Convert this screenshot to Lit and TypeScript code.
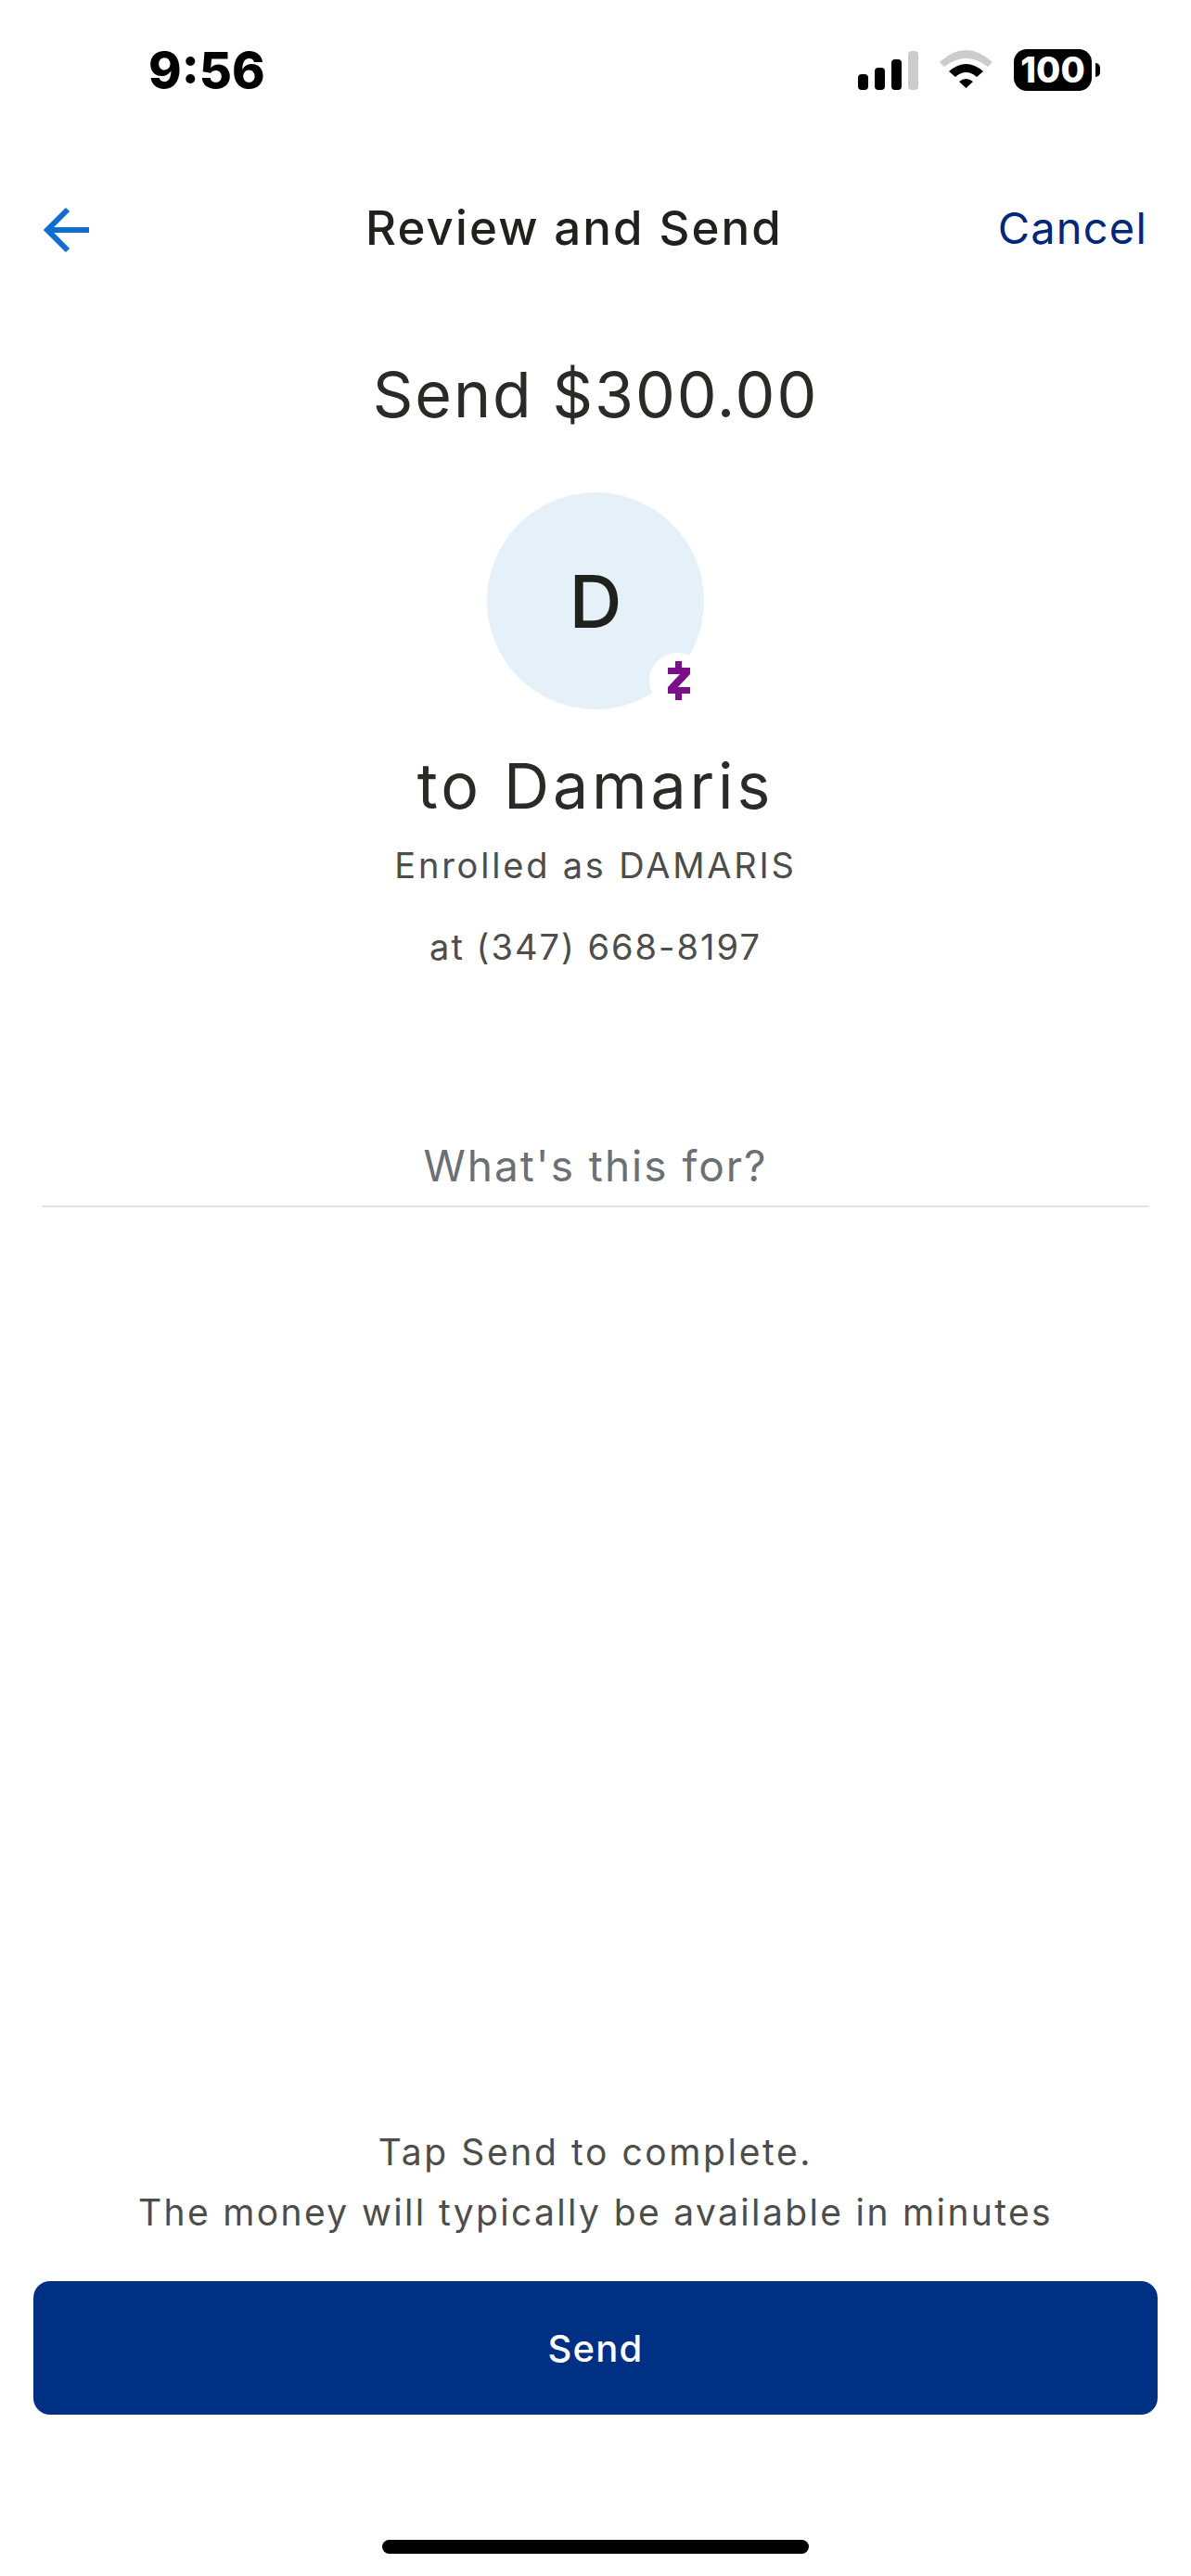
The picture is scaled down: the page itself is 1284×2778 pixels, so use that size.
import { LitElement, html, css } from 'lit';
import { customElement } from 'lit/decorators.js';

@customElement('app-root')
export class AppRoot extends LitElement {
  static styles = css`
    :host {
      display: block;
      width: 1284px;
      height: 2778px;
      background: #fff;
      font-family: Inter, 'Liberation Sans', sans-serif;
      color: #4d4d4b;
    }
    .screen {
      height: 100%;
      display: flex;
      flex-direction: column;
      align-items: center;
      overflow: hidden;
    }
    .status {
      align-self: stretch;
      height: 108px;
      padding: 53px 98px 0 160px;
      box-sizing: border-box;
      display: flex;
      justify-content: space-between;
      align-items: flex-start;
    }
    .time {
      font: 800 54px/46px Inter, 'Liberation Sans', sans-serif;
      color: #000;
    }
    .status-icons {
      display: flex;
      align-items: flex-start;
    }
    .status-icons svg {
      display: block;
    }
    .battery {
      width: 84px;
      height: 45px;
      margin-left: 23px;
      border-radius: 14px;
      background: #000;
      color: #fff;
      font: 800 38px/45px Inter, 'Liberation Sans', sans-serif;
      text-align: center;
    }
    .nub {
      width: 5px;
      height: 15px;
      margin: 15px 0 0 4px;
      border-radius: 0 5px 5px 0;
      background: #000;
    }
    .nav {
      align-self: stretch;
      height: 84px;
      margin-top: 95px;
      padding: 0 47px 0 47px;
      display: grid;
      grid-template-columns: 1fr auto 1fr;
      align-items: center;
    }
    .nav svg {
      display: block;
      margin-top: 6px;
    }
    .nav-title {
      font-size: 51px;
      font-weight: 500;
      letter-spacing: 2.1px;
      color: #20201e;
      transform: translateX(-23px);
    }
    .cancel {
      justify-self: end;
      font-size: 47px;
      letter-spacing: 1.2px;
      color: #00277c;
    }
    .amount {
      margin-top: 97px;
      font-size: 68px;
      line-height: 82px;
      letter-spacing: 1.9px;
      color: #2a2a28;
    }
    .avatar {
      position: relative;
      width: 234px;
      height: 234px;
      margin-top: 65px;
      border-radius: 50%;
      background: #e5f0f9;
      display: flex;
      align-items: center;
      justify-content: center;
      font-size: 79px;
      font-weight: 500;
      color: #1f211d;
    }
    .badge {
      position: absolute;
      left: 175px;
      top: 173px;
      width: 60px;
      height: 60px;
      border-radius: 50%;
      background: #fff;
      display: flex;
      align-items: center;
      justify-content: center;
    }
    .badge svg {
      margin-left: 4px;
    }
    .payee {
      margin-top: 41px;
      font-size: 68px;
      line-height: 82px;
      letter-spacing: 3.9px;
      color: #2a2a28;
    }
    .enrolled {
      margin-top: 22px;
      font-size: 38px;
      line-height: 46px;
      letter-spacing: 2.8px;
    }
    .phone {
      margin-top: 42px;
      font-size: 38px;
      line-height: 46px;
      letter-spacing: 2px;
    }
    .memo {
      align-self: stretch;
      margin: 185px 45px 0;
      padding-bottom: 15px;
      border-bottom: 2px solid #dfe1e3;
      text-align: center;
      font-size: 46px;
      line-height: 56px;
      letter-spacing: 2px;
      color: #6c7075;
    }
    .spacer {
      flex: 1;
    }
    .note {
      text-align: center;
      font-size: 39px;
      line-height: 65px;
      letter-spacing: 2.35px;
    }
    .note-lead {
      letter-spacing: 2.6px;
    }
    .send {
      align-self: stretch;
      height: 144px;
      margin: 42px 36px 0;
      border: 0;
      border-radius: 18px;
      background: #003084;
      color: #fff;
      font: 500 40px Inter, 'Liberation Sans', sans-serif;
      letter-spacing: 1.2px;
    }
    .home {
      width: 460px;
      height: 15px;
      margin: 135px 0 24px;
      border-radius: 8px;
      background: #000;
    }
  `;

  render() {
    return html`
      <div class="screen">
        <div class="status">
          <span class="time">9:56</span>
          <div class="status-icons">
            <svg width="150" height="45" viewBox="0 0 150 45">
              <rect x="5" y="27" width="11" height="17" rx="4" fill="#000" />
              <rect x="23" y="20" width="11" height="24" rx="4" fill="#000" />
              <rect x="41" y="11" width="11" height="33" rx="4" fill="#000" />
              <rect x="59" y="2" width="11" height="42" rx="4" fill="#ccc" />
              <path d="M93 14 Q121.5 -12 150 14 L145 19 Q121.5 1 98 19 Z" fill="#ccc" />
              <path d="M103 24 Q121.5 8 140 24 L133 30 Q121.5 20 110 30 Z" fill="#000" />
              <path d="M114 35 Q121.5 29 129 35 L121.5 42 Z" fill="#000" />
            </svg>
            <div class="battery">100</div>
            <div class="nub"></div>
          </div>
        </div>
        <div class="nav">
          <svg width="50" height="50" viewBox="0 0 50 50">
            <path d="M26 3 L4 25 L26 47 M4 25 H49" fill="none" stroke="#0f6cd0" stroke-width="6" />
          </svg>
          <span class="nav-title">Review and Send</span>
          <span class="cancel">Cancel</span>
        </div>
        <div class="amount">Send $300.00</div>
        <div class="avatar">
          D
          <div class="badge">
            <svg width="26" height="46" viewBox="0 0 26 46">
              <path d="M1 9 H25 V16 L12 30 H25 V37 H1 V30 L14 16 H1 Z M9 2 H16 V9 H9 Z M9 37 H16 V44 H9 Z" fill="#7b0f88" />
            </svg>
          </div>
        </div>
        <div class="payee">to Damaris</div>
        <div class="enrolled">Enrolled as DAMARIS</div>
        <div class="phone">at (347) 668-8197</div>
        <div class="memo">What's this for?</div>
        <div class="spacer"></div>
        <div class="note">
          <div class="note-lead">Tap Send to complete.</div>
          <div>The money will typically be available in minutes</div>
        </div>
        <button class="send">Send</button>
        <div class="home"></div>
      </div>
    `;
  }
}
